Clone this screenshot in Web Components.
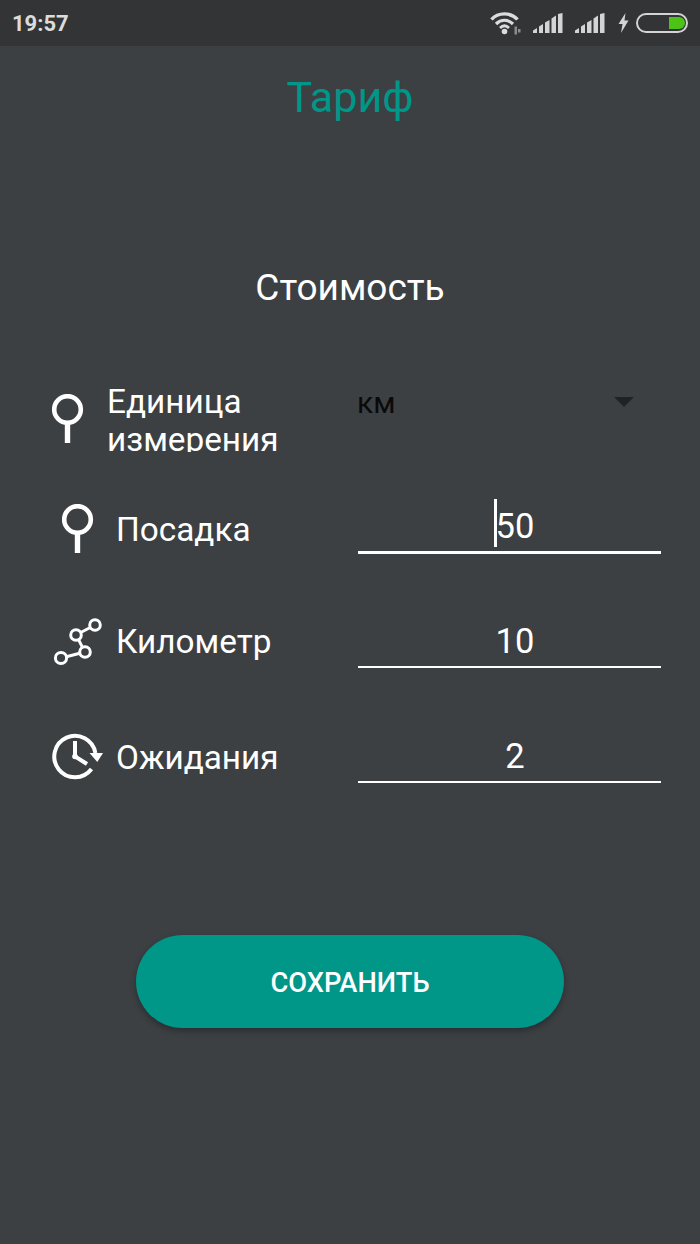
<!DOCTYPE html>
<html lang="ru">
<head>
<meta charset="utf-8">
<title>Тариф</title>
<style>
    html, body{
        margin: 0;
        padding: 0;
        background: #3c4043;
    }
    body{
        width: 700px;
        height: 1244px;
        overflow: hidden;
        font-family: Roboto, "Liberation Sans", sans-serif;
    }
</style>
</head>
<body>
<tariff-page>
    <status-bar slot="status" time="19:57"></status-bar>
    <tariff-row style="--row-h:67px;--row-mt:0px;--label-left:23px;--label-mt:-2px">
        <row-icon slot="icon" name="pin"></row-icon>
        <span slot="label">Единица измерения</span>
        <unit-select slot="field" value="км"></unit-select>
    </tariff-row>
    <tariff-row style="--row-h:68px;--row-mt:34px;--icon-left:10px;--label-left:22px;--shift:16px;--label-mt:4px">
        <row-icon slot="icon" name="pin"></row-icon>
        <span slot="label">Посадка</span>
        <value-field slot="field" value="50" thick focused></value-field>
    </tariff-row>
    <tariff-row style="--row-h:68px;--row-mt:46px;--label-left:14px;--shift:14px;--label-mt:2px">
        <row-icon slot="icon" name="route"></row-icon>
        <span slot="label">Километр</span>
        <value-field slot="field" value="10"></value-field>
    </tariff-row>
    <tariff-row style="--row-h:68px;--row-mt:47px;--label-left:12px;--shift:14px;--label-mt:3px">
        <row-icon slot="icon" name="clock"></row-icon>
        <span slot="label">Ожидания</span>
        <value-field slot="field" value="2"></value-field>
    </tariff-row>
    <save-button slot="action">Сохранить</save-button>
</tariff-page>

<script>
class TariffPage extends HTMLElement{
    constructor(){
        super();
        this.attachShadow({mode: "open"});
        this.shadowRoot.innerHTML = `
            <style>
                :host{
                    display: flex;
                    flex-direction: column;
                    width: 700px;
                    height: 1244px;
                    color: #fff;
                }
                h1{
                    margin: 21px 0 0;
                    height: 60px;
                    line-height: 60px;
                    font-size: 43px;
                    font-weight: 400;
                    text-align: center;
                    color: #009688;
                }
                h2{
                    margin: 131px 0 0;
                    height: 60px;
                    line-height: 60px;
                    font-size: 37px;
                    font-weight: 400;
                    text-align: center;
                }
                .rows{
                    display: flex;
                    flex-direction: column;
                    margin-top: 67px;
                    padding-left: 52px;
                }
                .action{
                    display: flex;
                    justify-content: center;
                    margin-top: 152px;
                }
            </style>
            <slot name="status"></slot>
            <h1>Тариф</h1>
            <h2>Стоимость</h2>
            <div class="rows"><slot></slot></div>
            <div class="action"><slot name="action"></slot></div>
        `;
    }
}

class StatusBar extends HTMLElement{
    constructor(){
        super();
        this.attachShadow({mode: "open"});
    }

    connectedCallback(){
        const bars = `
            <svg width="30" height="21" viewBox="0 0 30 21">
                <path d="M0 20 V17.5 L4 15 V20Z M6 20 V13.5 L10 11 V20Z M12 20 V9.5 L16.500 7 V20Z M18.500 20 V5.500 L23 2.500 V20Z M25 20 V1 L29.500 0 V20Z" fill="#d4d4d4"/>
            </svg>`;
        this.shadowRoot.innerHTML = `
            <style>
                :host{
                    display: flex;
                    align-items: center;
                    justify-content: space-between;
                    height: 46px;
                    padding: 0 12px 0 12px;
                    box-sizing: border-box;
                    background: #333436;
                    color: #dcdcdc;
                    font-size: 22px;
                    font-weight: 700;
                }
                .icons{
                    display: flex;
                    align-items: center;
                }
                .wifi{ margin-right: 11px; }
                .sig2{ margin-left: 12px; }
                .bolt{ margin: 0 7px 0 13px; }
                svg{ display: block; }
            </style>
            <span>${this.getAttribute("time")}</span>
            <div class="icons">
                <svg class="wifi" width="32" height="24" viewBox="0 0 32 24" fill="none" stroke="#dcdcdc">
                    <path d="M1.500 8.500 C8 1 21 1 27.500 8.500" stroke-width="3.400"/>
                    <path d="M6 13 C11 8 18 8 23 13" stroke-width="3.200"/>
                    <path d="M10 17 C13 14 16 14 19 17" stroke-width="2.800"/>
                    <circle cx="14.500" cy="20.500" r="2.800" fill="#dcdcdc" stroke="none"/>
                    <path d="M24.500 15.500 h2.500 v8 h-2.500z M28 18 h2.500 v3.500 h-2.500z" fill="#8b8b8b" stroke="none"/>
                </svg>
                <span class="sig1">${bars}</span>
                <span class="sig2">${bars}</span>
                <svg class="bolt" width="11" height="20" viewBox="0 0 11 20">
                    <path d="M7.500 0 L0.500 11 H4.500 L3 20 L10.500 7.500 H6.500Z" fill="#d4d4d4"/>
                </svg>
                <svg width="52" height="20" viewBox="0 0 52 20">
                    <rect x="1" y="1" width="50" height="18" rx="9" fill="none" stroke="#d4d4d4" stroke-width="2"/>
                    <path d="M33 4 H43 A6 6 0 0 1 43 16 H33Z" fill="#4cc417"/>
                </svg>
            </div>
        `;
    }
}

class RowIcon extends HTMLElement{
    constructor(){
        super();
        this.attachShadow({mode: "open"});
    }

    getIcon(name){
        if (name === "route") {
            return `<svg width="50" height="50" viewBox="0 0 50 50" fill="none" stroke="#fff" stroke-width="3">
                <circle cx="43" cy="9" r="5.300"/>
                <circle cx="24" cy="19" r="5.300"/>
                <circle cx="33" cy="36" r="5.300"/>
                <circle cx="9" cy="42" r="5.600"/>
                <path d="M38.300 11.500 L28.700 16.500 M26.600 23.600 L30.400 31.400 M27.800 37.300 L14.400 40.700"/>
            </svg>`;
        }
        if (name === "clock") {
            return `<svg width="52" height="48" viewBox="0 0 52 48" fill="none" stroke="#fff" stroke-width="4">
                <path d="M43.400 21 A20.700 20.700 0 1 0 39.500 37"/>
                <path d="M23 9 V24.500 L35 32"/>
                <circle cx="23" cy="24.500" r="2.800" fill="#fff" stroke="none"/>
                <path d="M37.500 21 H51 L45.300 30Z" fill="#fff" stroke="none"/>
            </svg>`;
        }
        return `<svg width="32" height="49" viewBox="0 0 32 49" fill="none" stroke="#fff">
            <circle cx="15.500" cy="15.500" r="13.300" stroke-width="4.600"/>
            <path d="M15.500 28 V49" stroke-width="5.400"/>
        </svg>`;
    }

    connectedCallback(){
        this.shadowRoot.innerHTML = `
            <style>
                :host{ display: block; line-height: 0; }
                svg{ display: block; }
            </style>
            ${this.getIcon(this.getAttribute("name"))}
        `;
    }
}

class TariffRow extends HTMLElement{
    constructor(){
        super();
        this.attachShadow({mode: "open"});
        this.shadowRoot.innerHTML = `
            <style>
                :host{
                    display: grid;
                    grid-template-columns: 306px 303px;
                    height: var(--row-h);
                    margin-top: var(--row-mt);
                    font-size: 33.3px;
                }
                .left{
                    display: flex;
                    align-items: center;
                    min-width: 0;
                    height: var(--row-h);
                    box-sizing: border-box;
                    padding-top: var(--shift, 0);
                }
                .icon{
                    flex: none;
                    margin-left: var(--icon-left, 0);
                }
                .label{
                    margin-left: var(--label-left, 0);
                    margin-top: var(--label-mt, 0);
                    max-width: 190px;
                    max-height: 69px;
                    overflow: hidden;
                    line-height: 38px;
                    color: #fff;
                }
            </style>
            <div class="left">
                <div class="icon"><slot name="icon"></slot></div>
                <div class="label"><slot name="label"></slot></div>
            </div>
            <slot name="field"></slot>
        `;
    }
}

class UnitSelect extends HTMLElement{
    constructor(){
        super();
        this.attachShadow({mode: "open"});
    }

    connectedCallback(){
        this.shadowRoot.innerHTML = `
            <style>
                :host{
                    display: flex;
                    justify-content: space-between;
                    align-items: flex-start;
                    padding: 0 27px 0 0;
                    margin-left: -1px;
                    color: #0a0a0a;
                    font-size: 30px;
                }
                span{ line-height: 35px; }
                i{
                    display: block;
                    margin-top: 12px;
                    border-left: 10px solid transparent;
                    border-right: 10px solid transparent;
                    border-top: 10px solid #222;
                }
            </style>
            <span>${this.getAttribute("value")}</span>
            <i></i>
        `;
    }
}

class ValueField extends HTMLElement{
    constructor(){
        super();
        this.attachShadow({mode: "open"});
    }

    connectedCallback(){
        const thick = this.hasAttribute("thick");
        const caret = this.hasAttribute("focused") ? `<b></b>` : "";
        this.shadowRoot.innerHTML = `
            <style>
                :host{
                    display: block;
                    align-self: end;
                    height: ${thick ? 60 : 59}px;
                    box-sizing: border-box;
                    padding: 8px 0 0 11px;
                    border-bottom: ${thick ? 3 : 2}px solid #fff;
                    color: #fff;
                    font-size: 34.5px;
                    line-height: 48px;
                    text-align: center;
                }
                span{ position: relative; }
                b{
                    position: absolute;
                    left: -2px;
                    top: -7px;
                    width: 3.500px;
                    height: 48px;
                    background: #fff;
                }
            </style>
            <span>${caret}${this.getAttribute("value")}</span>
        `;
    }
}

class SaveButton extends HTMLElement{
    constructor(){
        super();
        this.attachShadow({mode: "open"});
        this.shadowRoot.innerHTML = `
            <style>
                :host{
                    display: flex;
                    align-items: center;
                    justify-content: center;
                    width: 428px;
                    height: 93px;
                    box-sizing: border-box;
                    padding-top: 2px;
                    border-radius: 47px;
                    background: #009688;
                    box-shadow: 0 3px 6px rgba(0, 0, 0, .3);
                    color: #fff;
                    font-size: 27.3px;
                    font-weight: 500;
                    text-transform: uppercase;
                }
            </style>
            <slot></slot>
        `;
    }
}

customElements.define("tariff-page", TariffPage);
customElements.define("status-bar", StatusBar);
customElements.define("row-icon", RowIcon);
customElements.define("tariff-row", TariffRow);
customElements.define("unit-select", UnitSelect);
customElements.define("value-field", ValueField);
customElements.define("save-button", SaveButton);
</script>
</body>
</html>
